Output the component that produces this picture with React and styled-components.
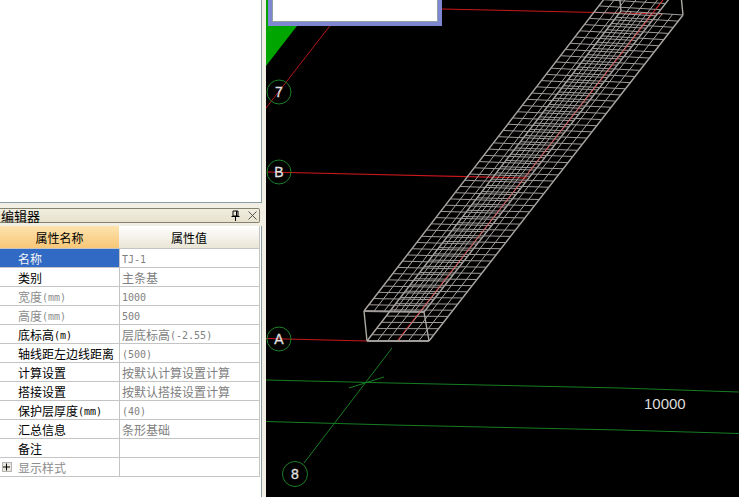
import React from "react";
import styled, { createGlobalStyle } from "styled-components";

const Global = createGlobalStyle`
  html, body { margin: 0; padding: 0; background: #000; }
  body { font-family: "Noto Sans CJK SC", "Liberation Sans", sans-serif; font-size: 12px; }
`;

const Shell = styled.div`
  display: flex;
  width: 739px;
  height: 497px;
  overflow: hidden;
`;

const Sidebar = styled.aside`
  display: flex;
  flex-direction: column;
  flex: 0 0 266px;
  width: 266px;
  background: #f1efe4;
`;

const TopPane = styled.div`
  flex: 0 0 203px;
  width: 262px;
  box-sizing: border-box;
  background: #fff;
  border-right: 1px solid #8a9ca4;
  border-bottom: 1px solid #8a9ca4;
`;

const TitleBar = styled.header`
  display: flex;
  align-items: center;
  box-sizing: border-box;
  width: 260px;
  height: 15px;
  margin: 5px 0 3px;
  padding-left: 1px;
  background: linear-gradient(#f0eee0, #e6e2cd);
  border: 1px solid #84826f;
  border-left: none;
  border-radius: 0 2px 2px 0;
`;

const Title = styled.span`
  flex: 1;
  font-size: 13px;
  line-height: 13px;
  color: #000;
`;

const BarButton = styled.button`
  display: flex;
  align-items: center;
  justify-content: center;
  width: 12px;
  height: 12px;
  margin-right: ${(p) => p.$gap}px;
  padding: 0;
  background: none;
  border: none;
`;

const EditorPane = styled.section`
  flex: 1;
  width: 262px;
  box-sizing: border-box;
  background: #fff;
  border-right: 1px solid #8a9ca4;
`;

const Grid = styled.div`
  width: 260px;
  box-sizing: border-box;
  border-right: 1px solid #c4c4c4;
`;

const HeadRow = styled.div`
  display: grid;
  grid-template-columns: 119px 1fr;
  height: 23px;
  box-sizing: border-box;
  border-bottom: 1px solid #c4c4c4;
`;

const HeadCell = styled.div`
  display: flex;
  align-items: center;
  justify-content: center;
  color: #000;
  font-size: 12px;
  background: ${(p) =>
    p.$active
      ? "linear-gradient(#fde3ae, #f8c778)"
      : "linear-gradient(#ffffff, #e9e6d6)"};
`;

const Row = styled.div`
  display: grid;
  grid-template-columns: 119px 1fr;
  height: 19px;
  box-sizing: border-box;
  border-bottom: 1px solid #c4c4c4;
`;

const NameCell = styled.div`
  display: flex;
  align-items: center;
  box-sizing: border-box;
  padding-left: 18px;
  position: relative;
  white-space: nowrap;
  font-size: 12px;
  color: ${(p) => (p.$selected ? "#f4f4f4" : p.$muted ? "#8c8c8c" : "#000")};
  background: ${(p) => (p.$selected ? "#316ac5" : "#fff")};
`;

const ValueCell = styled.div`
  display: flex;
  align-items: center;
  padding-left: 2px;
  white-space: nowrap;
  font-size: 12px;
  color: #808080;
  border-left: 1px solid #c4c4c4;
`;

const Latin = styled.span`
  font-family: "DejaVu Sans Mono", "Liberation Mono", monospace;
  font-size: 10px;
  margin-top: 2px;
  opacity: 0.99;
`;

const Expander = styled.span`
  position: absolute;
  left: 2px;
  top: 4px;
  width: 10px;
  height: 10px;
  box-sizing: border-box;
  display: flex;
  align-items: center;
  justify-content: center;
  background: #e9e7dc;
  border: 1px solid #b4b4b4;
`;

const Canvas = styled.main`
  position: relative;
  flex: 1;
  background: #000;
  overflow: hidden;
`;

const Drawing = styled.svg`
  display: block;
  width: 473px;
  height: 497px;
`;

const FloatingPanel = styled.div`
  position: absolute;
  left: 2px;
  top: -10px;
  width: 174px;
  height: 36px;
  box-sizing: border-box;
  background: #fff;
  border: 4px solid #7f86d2;
  border-top: none;
  box-shadow: inset 0 0 0 1px #8fa3a3;
`;

const Mixed = ({ text }) =>
  text.split(/([\x00-\x7f]+)/).map((part, i) =>
    /^[\x00-\x7f]+$/.test(part) ? <Latin key={i}>{part}</Latin> : part
  );

const rows = [
  { name: "名称", value: "TJ-1", selected: true },
  { name: "类别", value: "主条基" },
  { name: "宽度(mm)", value: "1000", muted: true },
  { name: "高度(mm)", value: "500", muted: true },
  { name: "底标高(m)", value: "层底标高(-2.55)" },
  { name: "轴线距左边线距离", value: "(500)" },
  { name: "计算设置", value: "按默认计算设置计算" },
  { name: "搭接设置", value: "按默认搭接设置计算" },
  { name: "保护层厚度(mm)", value: "(40)" },
  { name: "汇总信息", value: "条形基础" },
  { name: "备注", value: "" },
  { name: "显示样式", value: "", muted: true, expandable: true },
];

const lerp = (a, b, t) => [a[0] + (b[0] - a[0]) * t, a[1] + (b[1] - a[1]) * t];

const Face = ({ nl, nr, fl, fr, across = 6, along = 53 }) => {
  const longs = [];
  for (let i = 0; i <= across; i++) {
    const t = i / across;
    const a = lerp(nl, nr, t);
    const b = lerp(fl, fr, t);
    longs.push(
      <line key={i} x1={a[0]} y1={a[1]} x2={b[0]} y2={b[1]} stroke="#aca8a4"
        strokeWidth={i === 0 || i === across ? 1.4 : 1} />
    );
  }
  const cross = [];
  for (let j = 0; j <= along; j++) {
    const t = j / along;
    const a = lerp(nl, fl, t);
    const b = lerp(nr, fr, t);
    cross.push(
      <line key={j} x1={a[0]} y1={a[1]} x2={b[0]} y2={b[1]} stroke="#a09c9a"
        strokeWidth={j === 0 ? 1.8 : 1} />
    );
  }
  return <g>{longs}{cross}</g>;
};

const Axis = ({ cx, cy, r = 12, label }) => (
  <g>
    <circle cx={cx} cy={cy} r={r} fill="none" stroke="#1a7f26" strokeWidth="1" />
    <text x={cx} y={cy + 5} textAnchor="middle" fontFamily="'Liberation Sans', sans-serif"
      fontSize="14" fill="#e2e2e2" stroke="#e2e2e2" strokeWidth="0.3">{label}</text>
  </g>
);

const CadScene = () => (
  <Drawing viewBox="266 0 473 497">
    <polygon points="266,0 317,0 266,66" fill="#00a500" />
    <g stroke="#167d22" strokeWidth="1" fill="none">
      <polyline points="266,380 392,383 620,388 739,392" />
      <polyline points="266,421.5 392,425 620,430 739,433.5" />
      <line x1="349" y1="388" x2="384" y2="377" />
      <line x1="304" y1="463" x2="392" y2="348" />
    </g>
    <g stroke="#c8181c" strokeWidth="1.1" fill="none">
      <line x1="266" y1="108" x2="350" y2="0" strokeWidth="0.9" />
      <line x1="267" y1="172" x2="527" y2="178" />
      <line x1="266" y1="338.5" x2="367" y2="341" />
      <line x1="442" y1="9" x2="663" y2="14" />
      <line x1="398" y1="340" x2="663" y2="0" />
    </g>
    <Face nl={[364, 311]} nr={[424, 312]} fl={[618, -19]} fr={[680, -15]} />
    <Face nl={[367, 341]} nr={[429, 341]} fl={[621, 11]} fr={[683, 15]} />
    <g stroke="#aca8a4" strokeWidth="1.4">
      <line x1="364" y1="311" x2="367" y2="341" />
      <line x1="424" y1="312" x2="429" y2="341" />
      <line x1="618" y1="-19" x2="621" y2="11" />
      <line x1="680" y1="-15" x2="683" y2="15" />
    </g>
    <line x1="398" y1="340" x2="663" y2="0" stroke="#c8383c" strokeWidth="0.8" opacity="0.7" />
    <Axis cx={279} cy={92} label="7" />
    <Axis cx={279} cy={172} label="B" />
    <Axis cx={279} cy={339} label="A" />
    <Axis cx={295} cy={474} r={12.5} label="8" />
    <text x="644" y="409" fontFamily="'Liberation Sans', sans-serif" fontSize="15" fill="#dcdcdc">10000</text>
  </Drawing>
);

const PinIcon = () => (
  <svg width="9" height="11" viewBox="0 0 9 11">
    <path d="M2 1h5v5H2zM5.5 1v5M0.5 6.5h8M4.5 6.5V11" fill="none" stroke="#000" strokeWidth="1" />
  </svg>
);

const CloseIcon = () => (
  <svg width="9" height="9" viewBox="0 0 9 9">
    <path d="M0.5 0.5l8 8M8.5 0.5l-8 8" fill="none" stroke="#444" strokeWidth="0.9" />
  </svg>
);

const PlusIcon = () => (
  <svg width="8" height="8" viewBox="0 0 8 8">
    <path d="M0 4h7M3.5 0.5v7" fill="none" stroke="#000" strokeWidth="1" />
  </svg>
);

export default function App() {
  return (
    <Shell>
      <Global />
      <Sidebar>
        <TopPane />
        <TitleBar>
          <Title>编辑器</Title>
          <BarButton $gap={5}><PinIcon /></BarButton>
          <BarButton $gap={1}><CloseIcon /></BarButton>
        </TitleBar>
        <EditorPane>
          <Grid>
            <HeadRow>
              <HeadCell $active>属性名称</HeadCell>
              <HeadCell>属性值</HeadCell>
            </HeadRow>
            {rows.map((r) => (
              <Row key={r.name}>
                <NameCell $selected={r.selected} $muted={r.muted}>
                  {r.expandable && <Expander><PlusIcon /></Expander>}
                  <Mixed text={r.name} />
                </NameCell>
                <ValueCell><Mixed text={r.value} /></ValueCell>
              </Row>
            ))}
          </Grid>
        </EditorPane>
      </Sidebar>
      <Canvas>
        <CadScene />
        <FloatingPanel />
      </Canvas>
    </Shell>
  );
}
